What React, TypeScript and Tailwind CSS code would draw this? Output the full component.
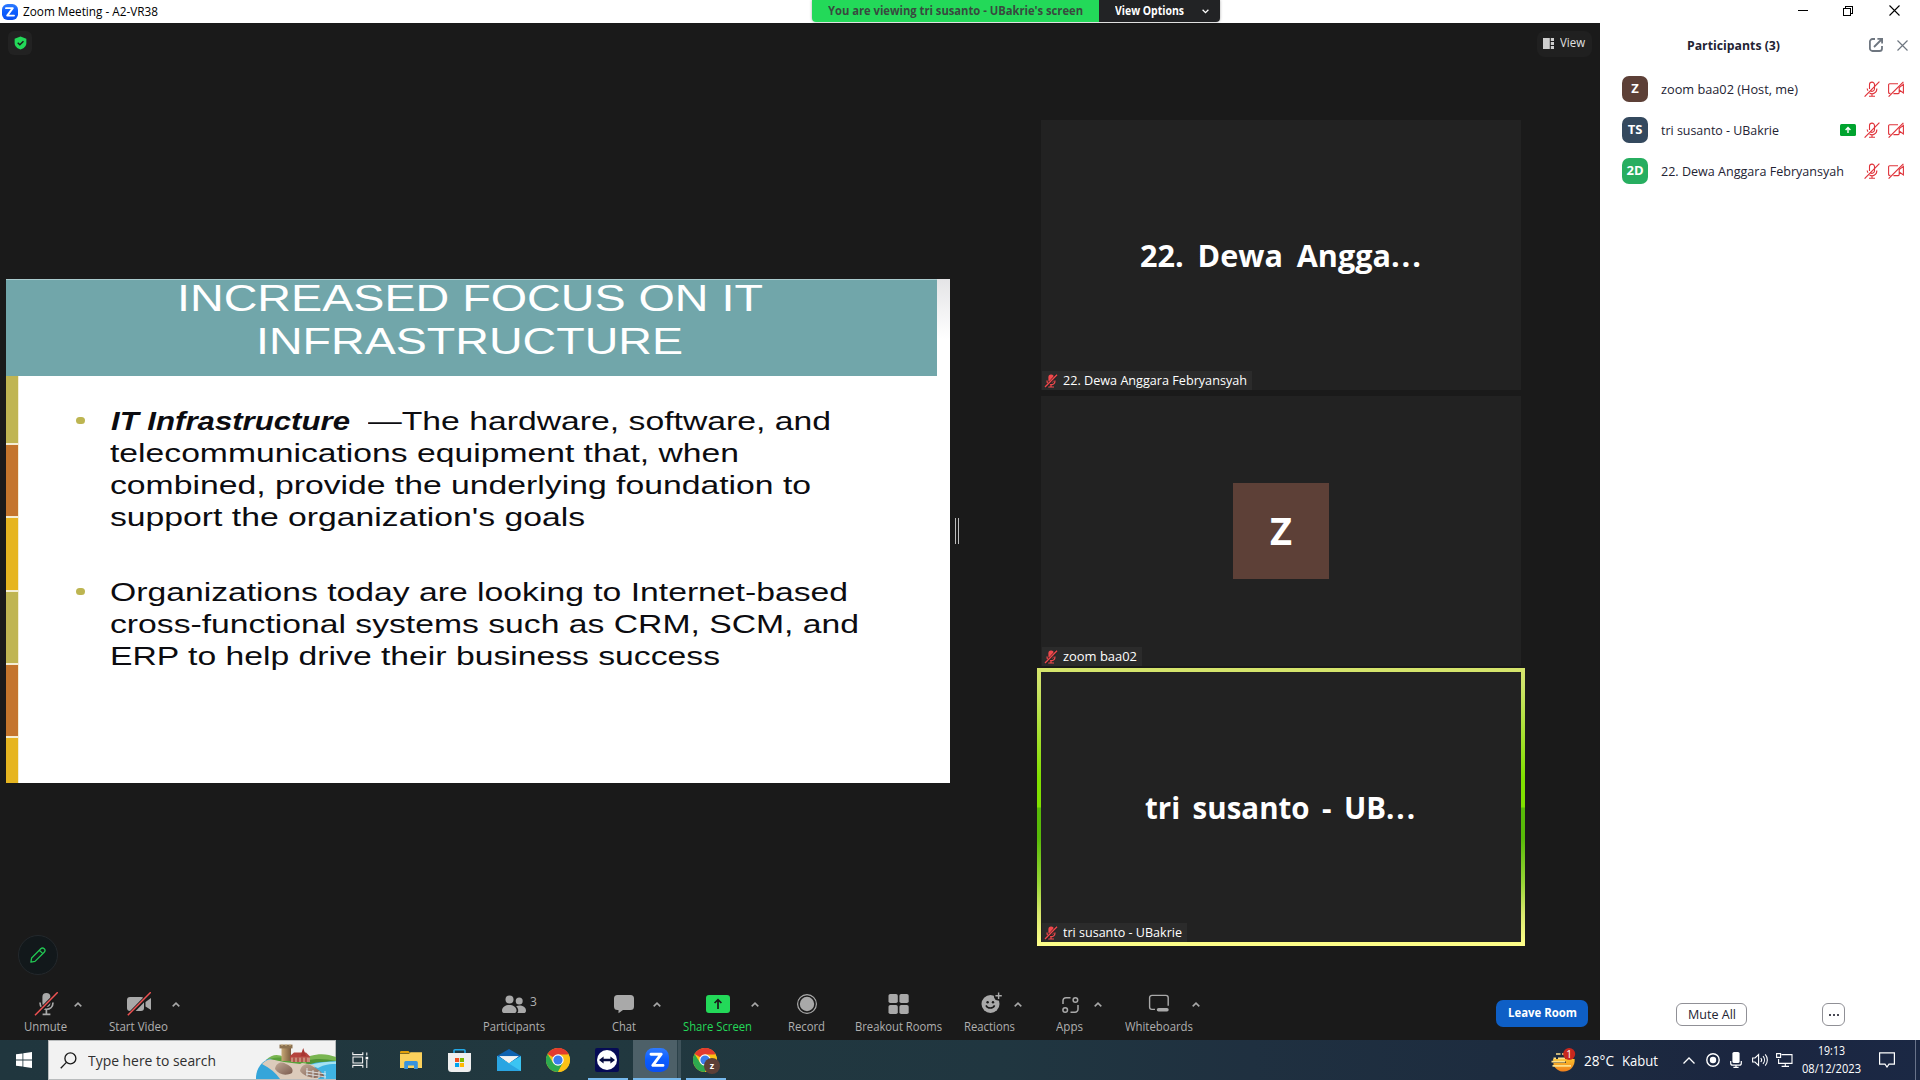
import { useLayoutEffect, useRef } from "react";
import type { ReactNode } from "react";

/* Text that is stretched or squeezed horizontally to fill the width of its box. */
function Fit({ className = "", children }: { className?: string; children: ReactNode }) {
  const box = useRef<HTMLSpanElement>(null);
  const text = useRef<HTMLSpanElement>(null);
  useLayoutEffect(() => {
    const b = box.current;
    const t = text.current;
    if (b && t && t.offsetWidth > 0) {
      t.style.transform = `scaleX(${b.clientWidth / t.getBoundingClientRect().width})`;
    }
  }, []);
  return (
    <span ref={box} className={`block shrink-0 whitespace-nowrap ${className}`}>
      <span ref={text} className="inline-block origin-left whitespace-pre">
        {children}
      </span>
    </span>
  );
}

function ZoomLogo({ className }: { className: string }) {
  return (
    <svg viewBox="0 0 24 24" className={className}>
      <defs>
        <linearGradient id="zl" x1="0" y1="0" x2="0" y2="1">
          <stop offset="0" stopColor="#2f7bff" />
          <stop offset="0.5" stopColor="#0b5cff" />
          <stop offset="1" stopColor="#0b50f0" />
        </linearGradient>
      </defs>
      <rect width="24" height="24" rx="8.5" fill="url(#zl)" />
      <path d="M6 6.2H16.2L7.8 17.4H18" fill="none" stroke="#fff" strokeWidth="2.9" strokeLinejoin="round" strokeLinecap="round" />
    </svg>
  );
}

function Chrome({ className }: { className: string }) {
  return (
    <svg viewBox="0 0 24 24" className={className}>
      <circle cx="12" cy="12" r="12" fill="#fbc116" />
      <path d="M12 12L1.6 6A12 12 0 0 1 22.4 6Z" fill="#e33b2e" />
      <path d="M12 6.4H22.6A12 12 0 0 0 12 0Z" fill="#e33b2e" />
      <path d="M1.6 6A12 12 0 0 0 12 24L17 14.8 12 12 7.1 14.8Z" fill="#2da94f" />
      <path d="M22.6 6.4H12V12L17 14.8 12 24A12 12 0 0 0 22.6 6.4Z" fill="#fbc116" />
      <circle cx="12" cy="12" r="5.7" fill="#fff" />
      <circle cx="12" cy="12" r="4.6" fill="#3b7ded" />
    </svg>
  );
}

function TileMic() {
  return (
    <svg viewBox="0 0 14 14" className="h-3.5 w-3.5 shrink-0">
      <rect x="4.4" y="0.6" width="5.4" height="8" rx="2.6" fill="#f2484c" />
      <path d="M3 6.4C3 12 11 12 11 6.4M7 10.6V13M4.2 13H10" stroke="#f2484c" strokeWidth="1.2" fill="none" />
      <path d="M1.6 13.2L12.6 1.2" stroke="#222" strokeWidth="2.8" />
      <path d="M1 13L13 0.8" stroke="#f2484c" strokeWidth="1.3" />
    </svg>
  );
}

function ListMic() {
  return (
    <svg viewBox="0 0 16 16" className="h-4 w-4 shrink-0" fill="none" stroke="#e0343b" strokeWidth="1.1">
      <path d="M5.5 8V3.6A2.5 2.5 0 0 1 10.5 3.6V8A2.5 2.5 0 0 1 6.5 9.8M3.2 7.5A4.8 4.8 0 0 0 4 9.8M5.5 12A4.8 4.8 0 0 0 12.8 7.5M8 12.4V15M5 15.2H11" />
      <path d="M0.6 15.6L15.4 0.6" strokeWidth="1.2" />
    </svg>
  );
}

function ListCam() {
  return (
    <svg viewBox="0 0 16 16" className="h-4 w-4 shrink-0" fill="none" stroke="#e0343b" strokeWidth="1.1">
      <path d="M10 2.8H1.6A1 1 0 0 0 0.6 3.8V11.4A1 1 0 0 0 1.6 12.4H2.4M5.4 12.6H10.2A1 1 0 0 0 11.2 11.6V5.6M11.2 6.6L15.4 3.4V12L11.2 9" />
      <path d="M0.6 15.6L15.4 0.8" strokeWidth="1.2" />
    </svg>
  );
}

function Tile({ name, pill, active, children }: { name: string; pill: string; active?: boolean; children: ReactNode }) {
  return (
    <div className="relative h-[270px] w-[480px]">
      {active && (
        <div className="absolute -inset-1 bg-[linear-gradient(to_bottom,#d6e56c_0px,#cfe46a_16px,#a4e02c_70px,#80e000_110px,#80e000_139px,#58ba08_140px,#58ba08_170px,#98d636_215px,#d8e86c_245px,#ffff8a_278px)]" />
      )}
      <div className="relative flex h-full w-full flex-col bg-[#222222]">
        <div className="flex h-full items-center justify-center">{children}</div>
        <div className="absolute bottom-0 left-px flex h-[19px] items-center bg-[#2b2b2b] pl-[2px]">
          <TileMic />
          <Fit className={`mr-[5px] ml-[5px] text-[12.5px] leading-[19px] text-white ${pill}`}>{name}</Fit>
        </div>
      </div>
    </div>
  );
}

function Caret({ className }: { className: string }) {
  return (
    <svg viewBox="0 0 8 5" className={`mt-[22px] h-[5px] w-2 shrink-0 ${className}`} fill="none" stroke="#a8a8a8" strokeWidth="1.6">
      <path d="M0.7 4.3L4 1.2 7.3 4.3" />
    </svg>
  );
}

function Tool({ label, className, color = "text-[#b0b0b0]", children }: { label: string; className: string; color?: string; children: ReactNode }) {
  return (
    <div className={`flex h-full shrink-0 flex-col items-center pt-3 ${className} ${color}`}>
      <div className="flex h-6 w-6 shrink-0 items-center justify-center">{children}</div>
      <Fit className="mt-[2px] w-full text-[12px] leading-[18px]">{label}</Fit>
    </div>
  );
}

const G = "#a9a9a9";

function Slide() {
  return (
    <div className="mt-[256px] ml-[6px] flex h-[504px] w-[944px] shrink-0 flex-col bg-white font-['Liberation_Sans',Arial,sans-serif]">
      <div className="flex h-[97px] bg-[linear-gradient(to_bottom,#e4e4e6,#ffffff_60px)]">
        <div className="w-[931px] border-t border-[#a9cbce] bg-[#71a6aa] text-[37px] leading-[43px] text-white">
          <div className="-mt-[3px]">
            <Fit className="ml-[171px] w-[586px]">INCREASED FOCUS ON IT</Fit>
            <Fit className="ml-[250px] w-[427px]">INFRASTRUCTURE</Fit>
          </div>
        </div>
      </div>
      <div className="flex flex-1">
        <div className="flex w-[13px] flex-col gap-[2px] bg-[#f4eed4] pr-px">
          <div className="h-[67px] bg-[#c0b552]" />
          <div className="h-[71px] bg-[#c4752c]" />
          <div className="h-[72px] bg-[#e6b520]" />
          <div className="h-[71px] bg-[#c0b552]" />
          <div className="h-[71px] bg-[#c4752c]" />
          <div className="flex-1 bg-[#e6b520]" />
        </div>
        <div className="flex flex-col pt-[29px] pl-[57px] text-[26px] leading-[32px] text-[#0c0c10]">
          <div className="flex">
            <div className="mt-[12px] h-[7px] w-[9px] rounded-full bg-[#bdb551]" />
            <div className="ml-[25px]">
              <div className="flex">
                <Fit className="ml-px w-[239px] font-bold italic">IT Infrastructure</Fit>
                <Fit className="ml-[18px] w-[463px]">—The hardware, software, and</Fit>
              </div>
              <Fit className="w-[629px]">telecommunications equipment that, when</Fit>
              <Fit className="w-[701px]">combined, provide the underlying foundation to</Fit>
              <Fit className="w-[475px]">support the organization's goals</Fit>
            </div>
          </div>
          <div className="mt-[43px] flex">
            <div className="mt-[12px] h-[7px] w-[9px] rounded-full bg-[#bdb551]" />
            <div className="ml-[25px]">
              <Fit className="w-[738px]">Organizations today are looking to Internet-based</Fit>
              <Fit className="w-[749px]">cross-functional systems such as CRM, SCM, and</Fit>
              <Fit className="w-[610px]">ERP to help drive their business success</Fit>
            </div>
          </div>
        </div>
      </div>
    </div>
  );
}

function Toolbar() {
  return (
    <div className="flex h-[60px] shrink-0 items-start">
      <Tool label="Unmute" className="ml-6 w-[43px]">
        <svg viewBox="0 0 24 24" className="h-6 w-6 shrink-0">
          <rect x="8.4" y="1" width="8" height="14" rx="4" fill={G} />
          <path d="M6 10.5C6 19.5 19 19.5 19 10.5M12.4 17V22M8.6 22.4H16.4" fill="none" stroke={G} strokeWidth="1.7" />
          <path d="M1.5 23.5L24 0.5" stroke="#1a1a1a" strokeWidth="4" />
          <path d="M1 23.2L23.8 0.2" stroke="#ee5252" strokeWidth="1.5" />
        </svg>
      </Tool>
      <Caret className="ml-[7px]" />
      <Tool label="Start Video" className="ml-[27px] w-[59px]">
        <svg viewBox="0 0 24 24" className="h-6 w-6 shrink-0">
          <rect x="0" y="5" width="17" height="14" rx="3" fill={G} />
          <path d="M18.5 10L24 6V18L18.5 14.5Z" fill={G} />
          <path d="M1.5 23.5L24 0.5" stroke="#1a1a1a" strokeWidth="4" />
          <path d="M0.8 23.2L23.8 0.2" stroke="#ee5252" strokeWidth="1.5" />
        </svg>
      </Tool>
      <Caret className="ml-1" />
      <Tool label="Participants" className="ml-[303px] w-[62px]">
        <div className="relative h-6 w-6">
          <svg viewBox="0 0 24 24" className="h-6 w-6" fill={G}>
            <circle cx="7.5" cy="7.5" r="4" />
            <circle cx="17.2" cy="9" r="3.5" />
            <path d="M0 18.5C0 11 14.5 11 14.5 18.5C14.5 20.4 13.5 21 12 21H2.5C1 21 0 20.4 0 18.5Z" />
            <path d="M14.2 14.2C18 12.6 24 14 24 18.5C24 20.4 23 21 21.6 21H15.4C17 19 16.2 16 14.2 14.2Z" />
          </svg>
          <span className="absolute top-0 left-7 text-[12px] leading-[20px] text-[#b0b0b0]">3</span>
        </div>
      </Tool>
      <Tool label="Chat" className="ml-[67px] w-6">
        <svg viewBox="0 0 24 24" className="h-6 w-6 shrink-0" fill={G}>
          <path d="M5.5 3H18.5A3.5 3.5 0 0 1 22 6.5V14.5A3.5 3.5 0 0 1 18.5 18H11L6.5 21.2V18H5.5A3.5 3.5 0 0 1 2 14.5V6.5A3.5 3.5 0 0 1 5.5 3Z" />
        </svg>
      </Tool>
      <Caret className="ml-[17px]" />
      <Tool label="Share Screen" className="ml-[22px] w-[69px]" color="text-[#23d959]">
        <svg viewBox="0 0 24 24" className="h-6 w-6 shrink-0">
          <rect y="3" width="24" height="18" rx="3" fill="#23d959" />
          <path d="M12 17V8M8.6 11L12 7.6 15.4 11" fill="none" stroke="#1a1a1a" strokeWidth="1.7" />
        </svg>
      </Tool>
      <Caret className="-ml-px" />
      <Tool label="Record" className="ml-[29px] w-[37px]">
        <svg viewBox="0 0 24 24" className="h-6 w-6 shrink-0">
          <circle cx="12" cy="12" r="9.4" fill="none" stroke={G} strokeWidth="1.2" />
          <circle cx="12" cy="12" r="7.2" fill={G} />
        </svg>
      </Tool>
      <Tool label="Breakout Rooms" className="ml-[30px] w-[87px]">
        <svg viewBox="0 0 24 24" className="h-6 w-6 shrink-0" fill={G}>
          <rect x="1.5" y="2" width="9.3" height="9" rx="1.8" />
          <rect x="12.4" y="2" width="9.3" height="9" rx="1.8" />
          <rect x="1.5" y="13" width="9.3" height="9" rx="1.8" />
          <rect x="12.4" y="13" width="9.3" height="9" rx="1.8" />
        </svg>
      </Tool>
      <Tool label="Reactions" className="ml-[22px] w-[51px]">
        <svg viewBox="0 0 24 24" className="h-6 w-6 shrink-0">
          <circle cx="12.5" cy="12" r="9" fill={G} />
          <circle cx="20.4" cy="4" r="4.6" fill="#1a1a1a" />
          <path d="M20.6 0.6V7M17.4 3.8H23.8" stroke={G} strokeWidth="1.4" />
          <circle cx="9.6" cy="10.2" r="1.2" fill="#1a1a1a" />
          <circle cx="15" cy="10.2" r="1.2" fill="#1a1a1a" />
          <path d="M8 13.4C9.5 17 15 17 16.6 13.4" stroke="#1a1a1a" strokeWidth="1.5" fill="none" />
        </svg>
      </Tool>
      <Caret className="-ml-px" />
      <Tool label="Apps" className="ml-[34px] w-[27px]">
        <svg viewBox="0 0 24 24" className="h-6 w-6 shrink-0" fill="none" stroke={G} strokeWidth="1.5">
          <path d="M5 12V8.5A3 3 0 0 1 8 5.7H12.5M20 13V17A3 3 0 0 1 17 20.2H12.5" />
          <circle cx="17.4" cy="8" r="2.3" />
          <circle cx="7.2" cy="18" r="2.3" />
        </svg>
      </Tool>
      <Caret className="ml-[11px]" />
      <Tool label="Whiteboards" className="ml-[23px] w-[68px]">
        <svg viewBox="0 0 24 24" className="h-6 w-6 shrink-0" fill="none" stroke={G} strokeWidth="1.4">
          <path d="M8 17.4H4.8A2.4 2.4 0 0 1 2.6 15V5.8A2.4 2.4 0 0 1 5 3.4H18.8A2.4 2.4 0 0 1 21.2 5.8V13.8" />
          <path d="M11.5 17.7H20" strokeWidth="3.4" strokeLinecap="round" />
        </svg>
      </Tool>
      <Caret className="-ml-px" />
      <button className="mt-5 mr-3 ml-auto flex h-[27px] w-[92px] items-center justify-center rounded-[7px] bg-[#0e5fc6]">
        <Fit className="w-[69px] pb-px text-[12px] leading-[20px] font-bold text-white">Leave Room</Fit>
      </button>
    </div>
  );
}

function Person({ initials, bg, name, width, sharing }: { initials: string; bg: string; name: string; width: string; sharing?: boolean }) {
  return (
    <div className="flex h-[41px] items-center pr-4 pl-[22px]">
      <div className={`flex h-[26px] w-[26px] items-center justify-center rounded-[7px] text-[13px] font-bold text-white ${bg}`}>{initials}</div>
      <Fit className={`ml-[13px] pt-px text-[13px] leading-[18px] text-[#232333] ${width}`}>{name}</Fit>
      <div className="ml-auto flex items-center gap-2">
        {sharing && (
          <svg viewBox="0 0 16 12" className="h-3 w-4">
            <rect width="16" height="12" rx="1.5" fill="#00a32e" />
            <path d="M8 9V4M5.6 6L8 3.6 10.4 6" stroke="#fff" strokeWidth="1.4" fill="none" />
          </svg>
        )}
        <ListMic />
        <ListCam />
      </div>
    </div>
  );
}

function Castle() {
  return (
    <svg viewBox="0 0 80 35" className="h-[35px] w-20 shrink-0">
      <defs>
        <linearGradient id="tower" x1="0" x2="1">
          <stop offset="0" stopColor="#c7a876" />
          <stop offset="1" stopColor="#7b5b3e" />
        </linearGradient>
        <linearGradient id="rock" x1="0" x2="1" y1="0" y2="1">
          <stop offset="0" stopColor="#c0a896" />
          <stop offset="1" stopColor="#7b5b4e" />
        </linearGradient>
      </defs>
      <path d="M10 16C16 10 22 10 28 13 38 17 46 15 54 12 64 9 72 10 80 13V22H10Z" fill="#79b551" />
      <path d="M50 17C60 14 70 15 80 17V20H50Z" fill="#4f9436" />
      <path d="M52 21C62 17 72 18 80 17V35H62C66 30 60 25 52 21Z" fill="#3fb3e2" />
      <path d="M54 21C64 18 72 18 80 17.5V20C70 20 66 22 62 24Z" fill="#a5e2f3" />
      <path d="M0 35C-0.5 26 5 17 14 14.5L24 18 24 35Z" fill="#35a5da" />
      <path d="M6 20C10 16 14 14 20 16L46 19 58 21 62 35H24C20 29 14 24 6 20Z" fill="#dccbbb" />
      <path d="M14 15C22 12 40 14 50 17L44 20 28 18Z" fill="#5aa03a" />
      <rect x="25.5" y="3" width="9.5" height="14" fill="url(#tower)" />
      <path d="M23.5 0.6H36.5V4.4H23.5Z" fill="#8d7250" />
      <path d="M26 0.2V1.8M30 0.2V1.8M34 0.2V1.8" stroke="#d0b888" strokeWidth="1.4" />
      <path d="M34 12L38 8.6H50L54 12.4V16H34Z" fill="#b5433d" />
      <path d="M35 13.5H54V18H35Z" fill="#c98d78" />
      <path d="M44.5 12L47.2 4 50 12Z" fill="#a93632" />
      <path d="M38 13.5V18M42 13.5V18M46 13.5V18M50 13.5V18" stroke="#a33c38" strokeWidth="1.3" />
      <path d="M19 25C20 19 25 17 30 20 35 22 38 25 36 29 30 32 23 31 19 25Z" fill="url(#rock)" />
      <path d="M44 27C45 21 51 18 56 22 62 25 66 28 69 33L58 34C52 33 47 31 44 27Z" fill="url(#rock)" />
      <path d="M50 27L70 30M50 30L70 33M51 24V32M57 26V34M63 27V34M69 27V35" stroke="#e8f0f4" strokeWidth="0.8" />
    </svg>
  );
}

function Taskbar() {
  return (
    <div className="flex h-10 shrink-0 items-stretch bg-[linear-gradient(to_right,#20363e_0px,#21383f_600px,#203640_1000px,#1f3040_1250px,#1d2c3f_1500px,#1b2640_1750px,#1b2844_1920px)] font-['Open_Sans','Noto_Sans',sans-serif]">
      <div className="flex w-12 items-center justify-center">
        <svg viewBox="0 0 16 16" className="h-4 w-4" fill="#fff">
          <path d="M0 2.3L6.5 1.4V7.6H0ZM7.3 1.2L16 0V7.6H7.3ZM0 8.4H6.5V14.6L0 13.7ZM7.3 8.4H16V16L7.3 14.8Z" />
        </svg>
      </div>
      <div className="flex w-[288px] items-center border border-[#b9bcbd] bg-[#f2f2f2]">
        <svg viewBox="0 0 18 18" className="ml-[11px] h-[17px] w-[17px] shrink-0" fill="none" stroke="#1a1a1a" strokeWidth="1.4">
          <circle cx="11" cy="6.8" r="5.8" />
          <path d="M6.8 11L0.8 17.2" />
        </svg>
        <Fit className="ml-[11px] w-[128px] text-[15px] leading-[22px] text-[#2f2f2f]">Type here to search</Fit>
        <div className="-mr-px ml-auto flex shrink-0 items-end pt-[3px]">
          <Castle />
        </div>
      </div>
      <div className="flex w-[48px] items-center justify-center">
        <svg viewBox="0 0 17 16" className="h-4 w-[17px]" fill="none" stroke="#f2f2f2" strokeWidth="1.1">
          <path d="M0.8 0.3V2.6H10.8V0.3M0.8 15.7V13.4H10.8V15.7M1 5H10.6V11H1ZM14.8 0.5V3.4M14.8 8V16" />
          <rect x="13.6" y="4.8" width="2.6" height="2.6" fill="#fff" stroke="none" />
        </svg>
      </div>
      <div className="ml-[2px] flex w-[49px] items-center justify-center">
        <svg viewBox="0 0 22 18" className="h-[18px] w-[22px]">
          <path d="M0 1.2A1.2 1.2 0 0 1 1.2 0H8.5L10.5 2.5H0Z" fill="#e2a009" />
          <path d="M0 3H9L10.5 1.2H22V17H0Z" fill="#fbd15c" />
          <path d="M4.2 18V11.5A1.5 1.5 0 0 1 5.7 10H16.3A1.5 1.5 0 0 1 17.8 11.5V18H14V14.5H8V18Z" fill="#3993dd" />
        </svg>
      </div>
      <div className="flex w-[49px] items-center justify-center">
        <svg viewBox="0 0 23 23" className="h-[23px] w-[23px]">
          <path d="M6 5V1.8A1 1 0 0 1 7 0.8H16A1 1 0 0 1 17 1.8V5" fill="none" stroke="#23a9e8" strokeWidth="1.6" />
          <path d="M0 4H23V19.5A3.5 3.5 0 0 1 19.5 23H3.5A3.5 3.5 0 0 1 0 19.5Z" fill="#efefef" />
          <path d="M7 9H11.1V13H7Z" fill="#f25022" />
          <path d="M11.9 9H16V13H11.9Z" fill="#7fba00" />
          <path d="M7 14H11.1V18H7Z" fill="#00a4ef" />
          <path d="M11.9 14H16V18H11.9Z" fill="#ffb900" />
        </svg>
      </div>
      <div className="flex w-[49px] items-center justify-center">
        <svg viewBox="0 0 24 22" className="h-[22px] w-6">
          <path d="M0 7L12 0 24 7V12H0Z" fill="#0f62b0" />
          <path d="M0 7L12 14 24 7V22H0Z" fill="#3bc4f2" />
          <path d="M2.4 7.2H21.6L12 14Z" fill="#f3f3f3" />
          <path d="M0 7L24 22H0Z" fill="#2aa5e2" />
          <path d="M2.4 7.2H21.6L12 14Z" fill="#f3f3f3" />
        </svg>
      </div>
      <div className="flex w-[49px] items-center justify-center">
        <Chrome className="h-6 w-6" />
      </div>
      <div className="relative flex w-[49px] items-center justify-center">
        <svg viewBox="0 0 24 24" className="h-6 w-6">
          <rect width="24" height="24" rx="2" fill="#060b55" />
          <circle cx="12" cy="12" r="10" fill="#fff" />
          <path d="M4 12L8.6 8.4V10.8H15.4V8.4L20 12 15.4 15.6V13.2H8.6V15.6Z" fill="#060b40" />
        </svg>
        <div className="absolute bottom-0 left-[6px] h-[2px] w-10 bg-[#76b9ed]" />
      </div>
      <div className="relative ml-[2px] flex w-12 items-stretch">
        <div className="flex w-11 items-center justify-center bg-[#4d6068] pl-[3px]">
          <ZoomLogo className="h-6 w-6" />
        </div>
        <div className="w-1 border-l border-[#2b4149] bg-[#3e525a]" />
        <div className="absolute bottom-0 left-0 h-[2px] w-12 bg-[#76b9ed]" />
      </div>
      <div className="relative flex w-[49px] items-center pl-3">
        <Chrome className="h-6 w-6" />
        <div className="absolute top-[18px] left-[23px] flex h-4 w-4 items-center justify-center rounded-full bg-[#5d4037] text-[9px] font-bold text-white">z</div>
        <div className="absolute bottom-0 left-[5px] h-[2px] w-10 bg-[#76b9ed]" />
      </div>
      <div className="ml-auto flex items-center text-white">
        <svg viewBox="0 0 26 24" className="h-6 w-[26px]">
          <defs>
            <linearGradient id="sun" x1="0" x2="0" y1="0" y2="1">
              <stop offset="0" stopColor="#fbc02d" />
              <stop offset="1" stopColor="#f07f1c" />
            </linearGradient>
          </defs>
          <path d="M2 11H23.6C24.4 18 19 23.6 12.6 23.6 8 23.6 4.4 21 2.6 17Z" fill="url(#sun)" />
          <path d="M0 14.2H15" stroke="#1d2a40" strokeWidth="1.2" />
          <path d="M5 6H9.5M11 6H13.5M2.5 10.4H5M7 10.4H14M0.5 13.6H14M1.5 17.8H20" stroke="#fde08a" strokeWidth="1.7" />
          <circle cx="18.2" cy="6" r="6" fill="#c8281e" />
        </svg>
        <span className="relative -ml-[11px] w-[6px] -translate-y-[6px] text-center text-[10px] leading-none">1</span>
        <Fit className="ml-[12px] w-[30px] text-[14px]">28°C</Fit>
        <Fit className="ml-[8px] w-[36px] text-[14px]">Kabut</Fit>
        <svg viewBox="0 0 12 7" className="ml-[25px] h-[7px] w-3" fill="none" stroke="#fff" strokeWidth="1.3">
          <path d="M0.5 6.5L6 1 11.5 6.5" />
        </svg>
        <svg viewBox="0 0 14 14" className="ml-[11px] h-3.5 w-3.5">
          <circle cx="7" cy="7" r="6.2" fill="none" stroke="#fff" strokeWidth="1.4" />
          <circle cx="7" cy="7" r="3.2" fill="#fff" />
        </svg>
        <svg viewBox="0 0 12 16" className="ml-[10px] h-4 w-3" fill="none" stroke="#fff" strokeWidth="1.2">
          <rect x="2.4" y="0" width="7.2" height="11" rx="1.6" fill="#fff" stroke="none" />
          <path d="M0.7 9V11.2A2 2 0 0 0 2.7 13.2H9.3A2 2 0 0 0 11.3 11.2V9M6 13V15.4M3.4 15.4H8.6" />
        </svg>
        <svg viewBox="0 0 17 14" className="ml-[10px] h-3.5 w-[17px]" fill="none" stroke="#fff" strokeWidth="1.1">
          <path d="M0.6 5H3L6.6 1.6V12.4L3 9H0.6ZM8.8 5A3 3 0 0 1 8.8 9M11 3.2A5.6 5.6 0 0 1 11 10.8M13.2 1.4A8.4 8.4 0 0 1 13.2 12.6" />
        </svg>
        <svg viewBox="0 0 17 14" className="ml-[7px] h-3.5 w-[17px]" fill="none" stroke="#fff" strokeWidth="1.1">
          <path d="M5.5 1.6H16V10.4H2.6V6M0.6 0.6H4.6V4.4H0.6ZM9.3 10.4V13.2M5.6 13.4H13" />
        </svg>
        <div className="ml-[9px] flex w-[59px] flex-col items-center">
          <Fit className="w-[27px] text-[12px] leading-[18px]">19:13</Fit>
          <Fit className="w-[59px] text-[12px] leading-[18px]">08/12/2023</Fit>
        </div>
        <svg viewBox="0 0 16 16" className="ml-[18px] h-4 w-4" fill="none" stroke="#fff" strokeWidth="1.2">
          <path d="M0.6 0.8H15.4V12.2H10L8 15 6 12.2H0.6Z" />
        </svg>
        <div className="ml-[20px] h-10 w-px bg-[#69738a]" />
        <div className="w-1" />
      </div>
    </div>
  );
}

export default function App() {
  return (
    <div className="flex h-[1080px] w-[1920px] flex-col overflow-hidden bg-white font-['Open_Sans','Noto_Sans',sans-serif]">
      <header className="relative flex h-[23px] shrink-0 items-center bg-white">
        <ZoomLogo className="ml-[2px] h-4 w-4" />
        <Fit className="ml-[5px] w-[135px] text-[12px] leading-[20px] text-black">Zoom Meeting - A2-VR38</Fit>
        <div className="mr-[20px] ml-auto flex items-center pb-[2px]">
          <div className="h-px w-[10px] bg-black" />
          <svg viewBox="0 0 10 10" className="ml-[35px] h-[10px] w-[10px]" fill="none" stroke="#000" shapeRendering="crispEdges">
            <path d="M0.5 2.5H7.5V9.5H0.5ZM2.5 2.5V0.5H9.5V7.5H7.5" />
          </svg>
          <svg viewBox="0 0 11 11" className="ml-9 h-[11px] w-[11px]" fill="none" stroke="#000" strokeWidth="1.1">
            <path d="M0.5 0.5L10.5 10.5M10.5 0.5L0.5 10.5" />
          </svg>
        </div>
        <div className="absolute top-0 left-[812px] flex h-[22px] w-[408px] overflow-hidden rounded-b-[4px] shadow-[0_0_3px_rgba(0,0,0,0.35)]">
          <div className="flex w-[287px] items-center bg-[#23d959] pl-4">
            <Fit className="w-[255px] text-[12px] leading-[20px] font-bold text-[#39493f]">You are viewing tri susanto - UBakrie's screen</Fit>
          </div>
          <div className="flex flex-1 items-center bg-[#222325] pl-4">
            <Fit className="w-[69px] text-[12px] leading-[20px] font-bold text-white">View Options</Fit>
            <svg viewBox="0 0 7 5" className="ml-[18px] h-[5px] w-[7px]" fill="none" stroke="#fff" strokeWidth="1.3">
              <path d="M0.6 0.8L3.5 3.6 6.4 0.8" />
            </svg>
          </div>
        </div>
      </header>
      <div className="flex h-[1017px] shrink-0">
        <main className="flex w-[1600px] shrink-0 flex-col bg-[#1a1a1a]">
          <section className="relative flex h-[957px] items-start">
            <Slide />
            <div className="mt-[495px] ml-[5px] flex h-[26px] w-1 justify-between">
              <div className="w-px bg-[#bdbdbd]" />
              <div className="w-px bg-[#bdbdbd]" />
            </div>
            <div className="mt-[97px] ml-[82px] flex flex-col gap-[6px]">
              <Tile name="22. Dewa Anggara Febryansyah" pill="w-[184px]">
                <Fit className="w-[283px] text-[31px] leading-[40px] font-bold text-white [word-spacing:6px]">
                  22. Dewa Angga<span className="tracking-[2px]">...</span>
                </Fit>
              </Tile>
              <Tile name="zoom baa02" pill="w-[74px]">
                <div className="flex h-24 w-24 items-center justify-center bg-[#5d4037] pb-[2px] text-[38px] font-bold text-white">
                  Z
                </div>
              </Tile>
              <Tile name="tri susanto - UBakrie" pill="w-[119px]" active>
                <Fit className="w-[272px] text-[31px] leading-[40px] font-bold text-white [word-spacing:5px]">
                  tri susanto - UB<span className="tracking-[2px]">...</span>
                </Fit>
              </Tile>
            </div>
            <div className="absolute top-2 left-2 flex h-6 w-6 items-center justify-center rounded-md bg-[#222222]">
              <svg viewBox="0 0 14 15" className="h-[14px] w-[13px]">
                <path d="M7 0.5L13.3 3V7.5C13.3 11 10.5 13.5 7 14.5 3.5 13.5 0.7 11 0.7 7.5V3Z" fill="#23d959" />
                <path d="M4 7.3L6.3 9.5 10.2 5.6" fill="none" stroke="#1a1a1a" strokeWidth="1.5" />
              </svg>
            </div>
            <div className="absolute top-2 right-2 flex h-[26px] w-[55px] items-center rounded-lg bg-[#202020] pb-[2px] pl-[6px]">
              <svg viewBox="0 0 11 11" className="h-[11px] w-[11px]" fill="#cfcfcf">
                <path d="M0 0H6.8V11H0ZM7.8 0H11V3H7.8ZM7.8 4H11V7H7.8ZM7.8 8H11V11H7.8Z" />
              </svg>
              <Fit className="ml-[6px] w-[25px] text-[12px] leading-[18px] text-[#e0e0e0]">View</Fit>
            </div>
            <div className="absolute top-[912px] left-[18px] flex h-10 w-10 items-center justify-center rounded-full border border-[#23282c] bg-[#12181b]">
              <svg viewBox="0 0 16 16" className="h-4 w-4" fill="none" stroke="#22c653" strokeWidth="1.3" strokeLinejoin="round">
                <path d="M0.9 15.1L1.6 11 10.8 1.8A2.4 2.4 0 0 1 14.2 5.2L5 14.4ZM9.4 3.2L12.8 6.6" />
              </svg>
            </div>
          </section>
          <Toolbar />
        </main>
        <aside className="flex w-[320px] flex-col bg-white">
          <div className="flex h-[45px] items-center pb-px">
            <Fit className="ml-[87px] w-[93px] pb-px text-[13px] leading-[20px] font-bold text-[#232333]">Participants (3)</Fit>
            <svg viewBox="0 0 14 14" className="ml-[89px] h-3.5 w-3.5" fill="none" stroke="#6e7680" strokeWidth="1.8">
              <path d="M6 1H3.5A2.6 2.6 0 0 0 0.9 3.6V10.4A2.6 2.6 0 0 0 3.5 13H10.4A2.6 2.6 0 0 0 13 10.4V8M8.4 0.9H13.1V5.6M13 1L5 9" />
            </svg>
            <svg viewBox="0 0 11 11" className="ml-[14px] h-[11px] w-[11px]" fill="none" stroke="#6e7680" strokeWidth="1.2">
              <path d="M0.5 0.5L10.5 10.5M10.5 0.5L0.5 10.5" />
            </svg>
          </div>
          <div className="flex flex-1 flex-col">
            <Person initials="Z" bg="bg-[#5d4037]" name="zoom baa02 (Host, me)" width="w-[137px]" />
            <Person initials="TS" bg="bg-[#34495e]" name="tri susanto - UBakrie" width="w-[118px]" sharing />
            <Person initials="2D" bg="bg-[#27ae60]" name="22. Dewa Anggara Febryansyah" width="w-[183px]" />
          </div>
          <div className="mb-[14px] flex pl-[76px]">
            <button className="flex h-[23px] w-[71px] items-center justify-center rounded-[6px] border border-[#909096]">
              <Fit className="w-[48px] pb-px text-[13px] leading-[20px] text-[#232333]">Mute All</Fit>
            </button>
            <button className="ml-[75px] flex h-[23px] w-[23px] items-center justify-center gap-[2px] rounded-[6px] border border-[#909096]">
              <span className="h-[2px] w-[2px] bg-[#4a4a55]" />
              <span className="h-[2px] w-[2px] bg-[#4a4a55]" />
              <span className="h-[2px] w-[2px] bg-[#4a4a55]" />
            </button>
          </div>
        </aside>
      </div>
      <Taskbar />
    </div>
  );
}
